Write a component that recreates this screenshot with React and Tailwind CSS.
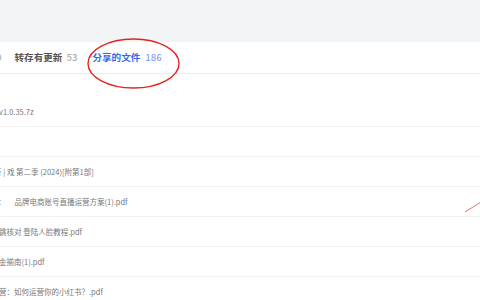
import React from 'react';

const rows = [
  { parts: [{ text: 'v1.0.35.7z', ml: '-ml-[1px]' }] },
  { parts: [] },
  { parts: [{ text: '行 | 戏 第二季 (2024)[附第1部]', ml: '-ml-[6px]' }] },
  { parts: [{ text: '：', ml: '-ml-[2px]' }, { text: '品牌电商账号直播运营方案(1).pdf', ml: 'ml-[9px]' }] },
  { parts: [{ text: '跳核对 登陆人脸教程.pdf', ml: '-ml-[1px]' }] },
  { parts: [{ text: '金揃南(1).pdf', ml: '-ml-[1px]' }] },
  { parts: [{ text: '营：如何运营你的小红书？.pdf', ml: '-ml-[1px]' }] },
];

export default function App() {
  return (
    <div className="relative w-[480px] h-[300px] overflow-hidden bg-white font-['Noto_Sans_CJK_SC','Noto_Sans',sans-serif]">
      {/* top grey band */}
      <div className="h-[42px] bg-[#f3f4f6]" />

      {/* tabs */}
      <div className="flex h-[32px] items-center border-b border-[#ececec] text-[9.6px] font-bold whitespace-nowrap">
        <span className="-ml-[4px] font-medium text-[#b0b0b0]">0</span>
        <span className="ml-[13px] text-[#555]">转存有更新</span>
        <span className="ml-[4px] font-medium text-[#ababab]">53</span>
        <span className="ml-[15px] text-[#2f6bf0]">分享的文件</span>
        <span className="ml-[5px] font-medium text-[#86a5f2]">186</span>
      </div>

      {/* file list */}
      <div className="pt-[23px]">
        {rows.map((row, i) => (
          <div
            key={i}
            className="flex h-[30px] items-center border-b border-[#f2f2f2] text-[7.5px] text-[#777] whitespace-nowrap"
          >
            {row.parts.map((p, j) => (
              <span key={j} className={p.ml}>{p.text}</span>
            ))}
          </div>
        ))}
      </div>

      {/* red annotation */}
      <svg className="absolute left-0 top-0" width="480" height="300" viewBox="0 0 480 300" fill="none">
        <ellipse cx="133.5" cy="63.5" rx="45.5" ry="24.5" stroke="#e5231d" strokeWidth="1.4" />
        <line x1="465" y1="212" x2="481" y2="202" stroke="#f06a66" strokeWidth="1" />
      </svg>
    </div>
  );
}
